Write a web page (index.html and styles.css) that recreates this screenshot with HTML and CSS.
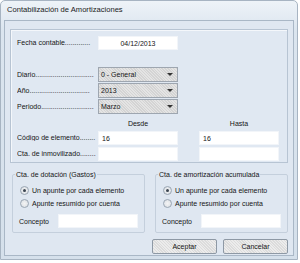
FILE: index.html
```html
<!DOCTYPE html>
<html>
<head>
<meta charset="utf-8">
<link rel="stylesheet" href="styles.css">
</head>
<body>
<div class="window">
  <div class="titlebar">Contabilización de Amortizaciones</div>
  <div class="client">
    <div class="panel">
      <div class="row row-fecha">
        <span class="label">Fecha contable.............</span>
        <span class="input center">04/12/2013</span>
      </div>
      <div class="row row-sel first">
        <span class="label">Diario..............................</span>
        <span class="select">0 - General<i class="arrow"></i></span>
      </div>
      <div class="row row-sel">
        <span class="label">Año...............................</span>
        <span class="select">2013<i class="arrow"></i></span>
      </div>
      <div class="row row-sel">
        <span class="label">Periodo...........................</span>
        <span class="select">Marzo<i class="arrow"></i></span>
      </div>
      <div class="row heads">
        <span class="label"></span>
        <span class="head">Desde</span>
        <span class="head wide">Hasta</span>
      </div>
      <div class="row row-in">
        <span class="label">Código de elemento........</span>
        <span class="input">16</span>
        <span class="input wide">16</span>
      </div>
      <div class="row row-in">
        <span class="label">Cta. de inmovilizado........</span>
        <span class="input"></span>
        <span class="input wide"></span>
      </div>
    </div>
    <div class="groups">
      <fieldset class="group">
        <legend>Cta. de dotación (Gastos)</legend>
        <div class="radio on"><i class="dot"></i>Un apunte por cada elemento</div>
        <div class="radio"><i class="dot"></i>Apunte resumido por cuenta</div>
        <div class="concepto"><span>Concepto</span><span class="input"></span></div>
      </fieldset>
      <fieldset class="group">
        <legend>Cta. de amortización acumulada</legend>
        <div class="radio on"><i class="dot"></i>Un apunte por cada elemento</div>
        <div class="radio"><i class="dot"></i>Apunte resumido por cuenta</div>
        <div class="concepto"><span>Concepto</span><span class="input"></span></div>
      </fieldset>
    </div>
    <div class="buttons">
      <span class="btn">Aceptar</span>
      <span class="btn">Cancelar</span>
    </div>
  </div>
</div>
</body>
</html>
```
FILE: styles.css
```css
html, body {
  margin: 0;
  padding: 0;
  background: #ffffff;
}
body {
  font-family: "Liberation Sans", Arial, sans-serif;
  font-size: 7px;
  color: #151515;
}
.window {
  width: 296px;
  height: 258px;
  background: linear-gradient(#eef3f8, #dbe5ef 30px, #d5e0eb);
  border: 1px solid #a7b4c2;
  border-radius: 5px 5px 0 0;
  display: flex;
  flex-direction: column;
}
.titlebar {
  height: 19px;
  line-height: 17px;
  padding-left: 6px;
  font-size: 7.6px;
  color: #1a1a1a;
}
.client {
  flex: 1;
  margin: 0 3px 3px 3px;
  border: 1px solid #a9b7c6;
  background: #dfe7f1;
  display: flex;
  flex-direction: column;
  padding: 8px 5px 0 5px;
}
.panel {
  height: 134px;
  border: 1px solid #b7c4d3;
  box-shadow: inset 1px 1px 0 #f4f7fb;
  background: #e0e8f2;
  padding: 5px 0 0 6px;
  box-sizing: border-box;
}
.row {
  display: flex;
  align-items: center;
  height: 15px;
}
.label {
  width: 81px;
  overflow: hidden;
  white-space: nowrap;
}
.row-fecha { margin-bottom: 17px; }
.row-sel { margin-bottom: 1px; }
.heads { height: 15px; padding-top: 2px; box-sizing: border-box; }
.head {
  width: 80px;
  text-align: center;
}
.head.wide { margin-left: 21px; }
.row-in { margin-bottom: 1px; height: 15px; }
.input {
  display: block;
  width: 80px;
  height: 14px;
  line-height: 13px;
  background: #fff;
  border: 1px solid #f2f5f9;
  box-sizing: border-box;
  padding-left: 3px;
}
.input.center { text-align: center; padding-left: 0; }
.input.wide { margin-left: 21px; }
.select {
  position: relative;
  display: block;
  width: 80px;
  height: 15px;
  line-height: 13px;
  box-sizing: border-box;
  border: 1px solid #9ea6b0;
  background: repeating-linear-gradient(45deg, #e4e4e4 0 1px, #d4d4d4 1px 2px);
  padding-left: 2px;
}
.arrow {
  position: absolute;
  right: 4px;
  top: 5px;
  width: 0;
  height: 0;
  border-left: 3px solid transparent;
  border-right: 3px solid transparent;
  border-top: 3px solid #333;
}
.groups {
  display: flex;
  gap: 10px;
  margin-top: 8px;
  padding-left: 2px;
}
.group {
  margin: 0;
  width: 133px;
  height: 62px;
  box-sizing: border-box;
  border: 1px solid #c4cfdc;
  border-radius: 2px;
  padding: 6px 0 0 6px;
}
.group legend {
  padding: 0 1px;
  margin-left: -4px;
}
.radio {
  display: flex;
  align-items: center;
  height: 13px;
  margin-left: 1px;
}
.dot {
  display: inline-block;
  width: 7px;
  height: 7px;
  border-radius: 50%;
  border: 1px solid #9aa6b3;
  background: radial-gradient(#f4f4f4, #d8dde3);
  margin-right: 3px;
  position: relative;
}
.radio.on .dot::after {
  content: "";
  position: absolute;
  left: 2px;
  top: 2px;
  width: 3px;
  height: 3px;
  border-radius: 50%;
  background: #3a4450;
}
.concepto {
  display: flex;
  align-items: center;
  margin-top: 4px;
}
.concepto span:first-child { width: 39px; }
.concepto .input { width: 80px; }
.buttons {
  display: flex;
  justify-content: flex-end;
  gap: 6px;
  margin-top: 6px;
  padding-right: 0;
}
.btn {
  width: 65px;
  height: 15px;
  line-height: 13px;
  box-sizing: border-box;
  text-align: center;
  border: 1px solid #8e99a5;
  border-radius: 2px;
  background: repeating-linear-gradient(45deg, #ececec 0 1px, #dcdcdc 1px 2px);
}
```
